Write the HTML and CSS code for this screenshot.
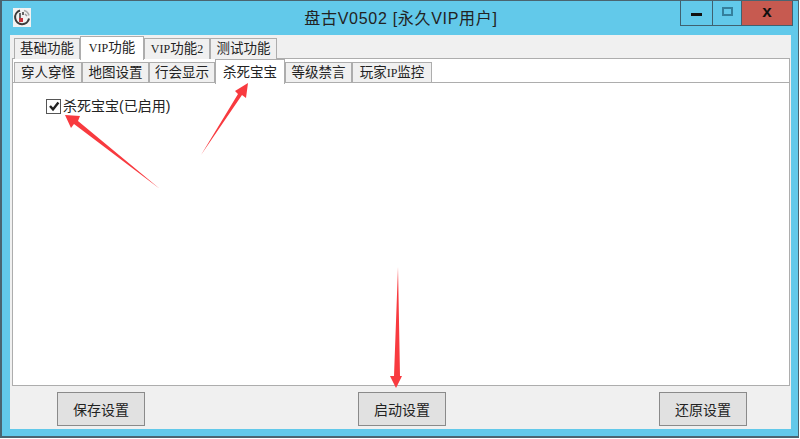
FILE: index.html
```html
<!DOCTYPE html>
<html lang="en">
<head>
    <meta charset="UTF-8">
    <title>盘古V0502</title>
    <link rel="stylesheet" href="styles.css">
</head>
<body>
<div class="window">
    <div class="titlebar">
        <svg class="app-icon" width="18" height="19" viewBox="0 0 18 19">
            <rect width="18" height="19" fill="#f2f2f2"/>
            <path d="M7 2.5a7 7 0 1 0 9 8" fill="none" stroke="#3a3a3a" stroke-width="2"/>
            <path d="M11 2.5a7 7 0 0 1 5 5" fill="none" stroke="#aaa" stroke-width="1.6"/>
            <path d="M7 5v5M10 4v3" stroke="#444" stroke-width="1.6"/>
            <path d="M12 6l2 2" stroke="#999" stroke-width="1.4"/>
            <rect x="6" y="10" width="4" height="4" fill="#c8343c"/>
        </svg>
        <div class="title">盘古V0502 [永久VIP用户]</div>
        <div class="controls">
            <div class="ctl ctl-min"><span class="min-bar"></span></div>
            <div class="ctl ctl-max"><span class="max-box"></span></div>
            <div class="ctl ctl-close">x</div>
        </div>
    </div>
    <div class="client">
        <div class="tabs tabs-main">
            <div class="tab w66">基础功能</div>
            <div class="tab w64 on"><span class="latin">VIP</span>功能</div>
            <div class="tab w66"><span class="latin">VIP</span>功能<span class="latin">2</span></div>
            <div class="tab w67">测试功能</div>
        </div>
        <div class="page">
            <div class="tabs tabs-sub">
                <div class="tab w68">穿人穿怪</div>
                <div class="tab w67">地图设置</div>
                <div class="tab w66">行会显示</div>
                <div class="tab w70 on">杀死宝宝</div>
                <div class="tab w67">等级禁言</div>
                <div class="tab w80">玩家<span class="latin">IP</span>监控</div>
            </div>
            <div class="pane">
                <label class="check">
                    <span class="box">
                        <svg width="12" height="12" viewBox="0 0 12 12"><path d="M2 6l3 3.4L10.4 2.4" fill="none" stroke="#222" stroke-width="2.4"/></svg>
                    </span>
                    杀死宝宝(已启用)
                </label>
            </div>
        </div>
        <div class="actions">
            <button class="btn">保存设置</button>
            <button class="btn">启动设置</button>
            <button class="btn">还原设置</button>
        </div>
    </div>

    <!-- red arrows drawn over the screenshot -->
    <svg class="marks" width="800" height="439" viewBox="0 0 800 439">
        <g fill="#f83a3f">
            <polygon points="65,115 80,116 78,121 160,189 74,124 71,128"/>
            <polygon points="248,83 246,98 242,95 201,155 238,94 235,91"/>
            <polygon points="398,267 400,376 402,376 396,388 390,376 394,376"/>
        </g>
    </svg>
</div>
</body>
</html>
```
FILE: styles.css
```css
html,body{margin: 0; padding: 0; font-family: "Liberation Sans", "Noto Sans CJK SC", sans-serif}
body{width: 800px; height: 439px; overflow: hidden; background: #fff;}

.window {
    position: relative;
    box-sizing: border-box;
    width: 799px;
    height: 438px;
    display: flex;
    flex-direction: column;
    background: #62c9ea;
    border: 1px solid #4a6470;
    border-width: 1px 1px 2px 2px;
    padding: 0 7px 7px 8px;
}

.titlebar {
    display: flex;
    align-items: flex-start;
    height: 34px;
    flex: none;
}
.app-icon {margin: 7px 0 0 3px; flex: none;}
.title {
    flex: 1;
    text-align: center;
    font-size: 16px;
    letter-spacing: .7px;
    line-height: 20px;
    padding: 8px 0 0 91px;
    color: #222;
}
.controls {display: flex; margin-right: -2px; flex: none;}
.ctl {
    box-sizing: border-box;
    height: 25px;
    border: 1px solid #3f6170;
    border-top: 0;
    display: flex;
    align-items: center;
    justify-content: center;
}
.ctl-min {width: 32px; border-right: 0;}
.ctl-max {width: 29px; border-right: 0;}
.ctl-close {
    width: 52px;
    background: #c75a50;
    color: #111;
    font: bold 17px/20px "Liberation Sans", sans-serif;
    padding-bottom: 3px;
}
.min-bar {width: 11px; height: 3px; background: #111; margin-top: 3px;}
.max-box {box-sizing: border-box; width: 11px; height: 9px; border: 2px solid #347f9c; margin-top: -3px;}

.client {
    flex: 1;
    display: flex;
    flex-direction: column;
    background: #f0f0f0;
    padding: 1px 1px 0 2px;
    min-height: 0;
}

.tabs {display: flex; align-items: flex-start; flex: none;}
.tabs-main {height: 22px; padding-left: 2px; position: relative; z-index: 1;}
.tabs-sub {
    box-sizing: border-box;
    height: 24px;
    padding-left: 1px;
    border-bottom: 1px solid #adadad;
    position: relative;
    z-index: 1;
}

.tab {
    box-sizing: border-box;
    height: 20px;
    margin-top: 3px;
    background: #f0f0f0;
    border: 1px solid #adadad;
    border-bottom: 0;
    font-size: 13.5px;
    line-height: 19px;
    text-align: center;
    color: #222;
    white-space: nowrap;
}
.tabs-main .tab {margin-top: 2px; height: 21px; line-height: 20px;}
.tab.on {
    height: 25px;
    margin-top: 0;
    background: #fff;
    line-height: 25px;
    position: relative;
}
.tabs-main .tab.on {margin-top: 0; height: 24px; line-height: 21px;}
.latin {font-family: "Liberation Serif", serif; font-size: 12px;}
.w64 {width: 64px;}
.w66 {width: 66px;}
.w67 {width: 67px;}
.w68 {width: 68px;}
.w70 {width: 70px;}
.w80 {width: 80px;}

.page {
    flex: none;
    height: 328px;
    box-sizing: border-box;
    background: #fff;
    border: 1px solid #adadad;
    display: flex;
    flex-direction: column;
}
.pane {flex: 1; padding: 14px 0 0 33px;}
.check {display: flex; align-items: center; gap: 2px; font-size: 14px; line-height: 18px; color: #222;}
.box {
    box-sizing: border-box;
    width: 15px;
    height: 15px;
    background: #fff;
    border: 1px solid #555;
    display: flex;
    align-items: center;
    justify-content: center;
}

.actions {
    flex: 1;
    display: flex;
    justify-content: space-between;
    align-items: flex-start;
    padding: 6px 43px 0 45px;
}
.btn {
    width: 88px;
    height: 34px;
    box-sizing: border-box;
    background: #e1e1e1;
    border: 1px solid #8a8a8a;
    font-family: inherit;
    font-size: 14px;
    color: #222;
    padding: 0;
}

.marks {position: absolute; left: -2px; top: -1px; pointer-events: none; z-index: 5;}
```
